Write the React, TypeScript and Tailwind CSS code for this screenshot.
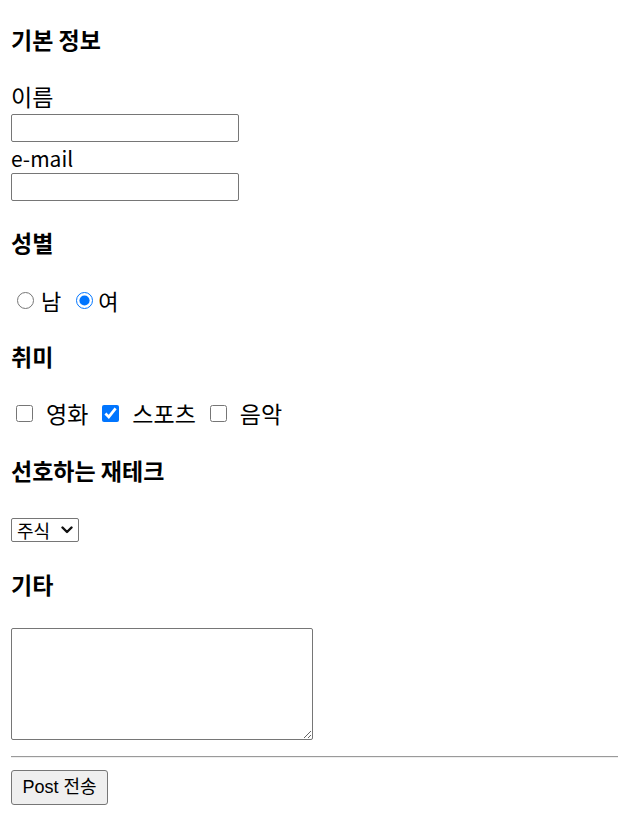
const kr = { fontFamily: '"Noto Sans CJK KR", "Noto Sans", sans-serif' }

const Heading = ({ children, className = "" }: { children: React.ReactNode; className?: string }) => (
  <h4 className={`h-[27px] text-[23px] leading-[24px] font-bold text-black ${className}`}>{children}</h4>
)

const CheckItem = ({ label, checked = false }: { label: string; checked?: boolean }) => (
  <label className="flex items-center">
    <input type="checkbox" defaultChecked={checked} className="w-[17px] h-[17px] m-0 accent-[#0075ff]" />
    <span className="ml-[13px] text-[23px] leading-[24px]">{label}</span>
  </label>
)

export default function App() {
  return (
    <div className="bg-white min-h-screen text-black pl-[11px] pt-[27px] pb-8" style={kr}>
      <form className="flex flex-col">
        {/* 기본 정보 */}
        <Heading>기본 정보</Heading>
        <label className="mt-[30px] text-[23px] leading-[24px]">이름</label>
        <input type="text" className="mt-[6px] w-[228px] h-[28px] border border-[#767676] rounded-[2px] px-1" />
        <label className="mt-[4px] text-[21px] leading-[24px]">e-mail</label>
        <input type="text" className="mt-[3px] w-[228px] h-[28px] border border-[#767676] rounded-[2px] px-1" />

        {/* 성별 */}
        <Heading className="mt-[29px]">성별</Heading>
        <div className="mt-[31px] h-[24px] flex items-center">
          <label className="flex items-center">
            <input type="radio" name="gender" className="ml-[6px] w-[17px] h-[17px] m-0 accent-[#0075ff]" />
            <span className="ml-[7px] text-[22px] leading-[24px]">남</span>
          </label>
          <label className="flex items-center ml-[15px]">
            <input type="radio" name="gender" defaultChecked className="w-[17px] h-[17px] m-0 accent-[#0075ff]" />
            <span className="ml-[5px] text-[22px] leading-[24px]">여</span>
          </label>
        </div>

        {/* 취미 */}
        <Heading className="mt-[32px]">취미</Heading>
        <div className="mt-[30px] h-[24px] flex items-center pl-[5px] gap-[14px]">
          <CheckItem label="영화" />
          <CheckItem label="스포츠" checked />
          <CheckItem label="음악" />
        </div>

        {/* 선호하는 재테크 */}
        <Heading className="mt-[33px] text-[23.5px]">선호하는 재테크</Heading>
        <div className="mt-[33px] relative w-[68px] h-[24px]">
          <select className="appearance-none w-[68px] h-[24px] border border-[#767676] rounded-[2px] pl-[5px] text-[18px] leading-[20px]">
            <option>주식</option>
            <option>부동산</option>
            <option>예금</option>
          </select>
          <svg className="absolute right-[6px] top-[8px] pointer-events-none" width="12" height="8" viewBox="0 0 12 8">
            <path d="M1.5 1.5 L6 6 L10.5 1.5" fill="none" stroke="#111" strokeWidth="2.4" strokeLinecap="round" strokeLinejoin="round" />
          </svg>
        </div>

        {/* 기타 */}
        <Heading className="mt-[30px]">기타</Heading>
        <textarea className="mt-[29px] w-[302px] h-[112px] border border-[#767676] rounded-[2px] p-1" />

        <hr className="mt-[16px] border-t border-b border-t-[#9a9a9a] border-b-[#eeeeee] border-x-0" />

        <div>
          <button
            type="button"
            className="mt-[12px] h-[35px] w-[97px] bg-[#efefef] border border-[#767676] rounded-[3px] text-[18px]"
            style={{ fontFamily: '"Liberation Sans", "Noto Sans CJK KR", sans-serif' }}
          >
            Post 전송
          </button>
        </div>
      </form>
    </div>
  )
}
